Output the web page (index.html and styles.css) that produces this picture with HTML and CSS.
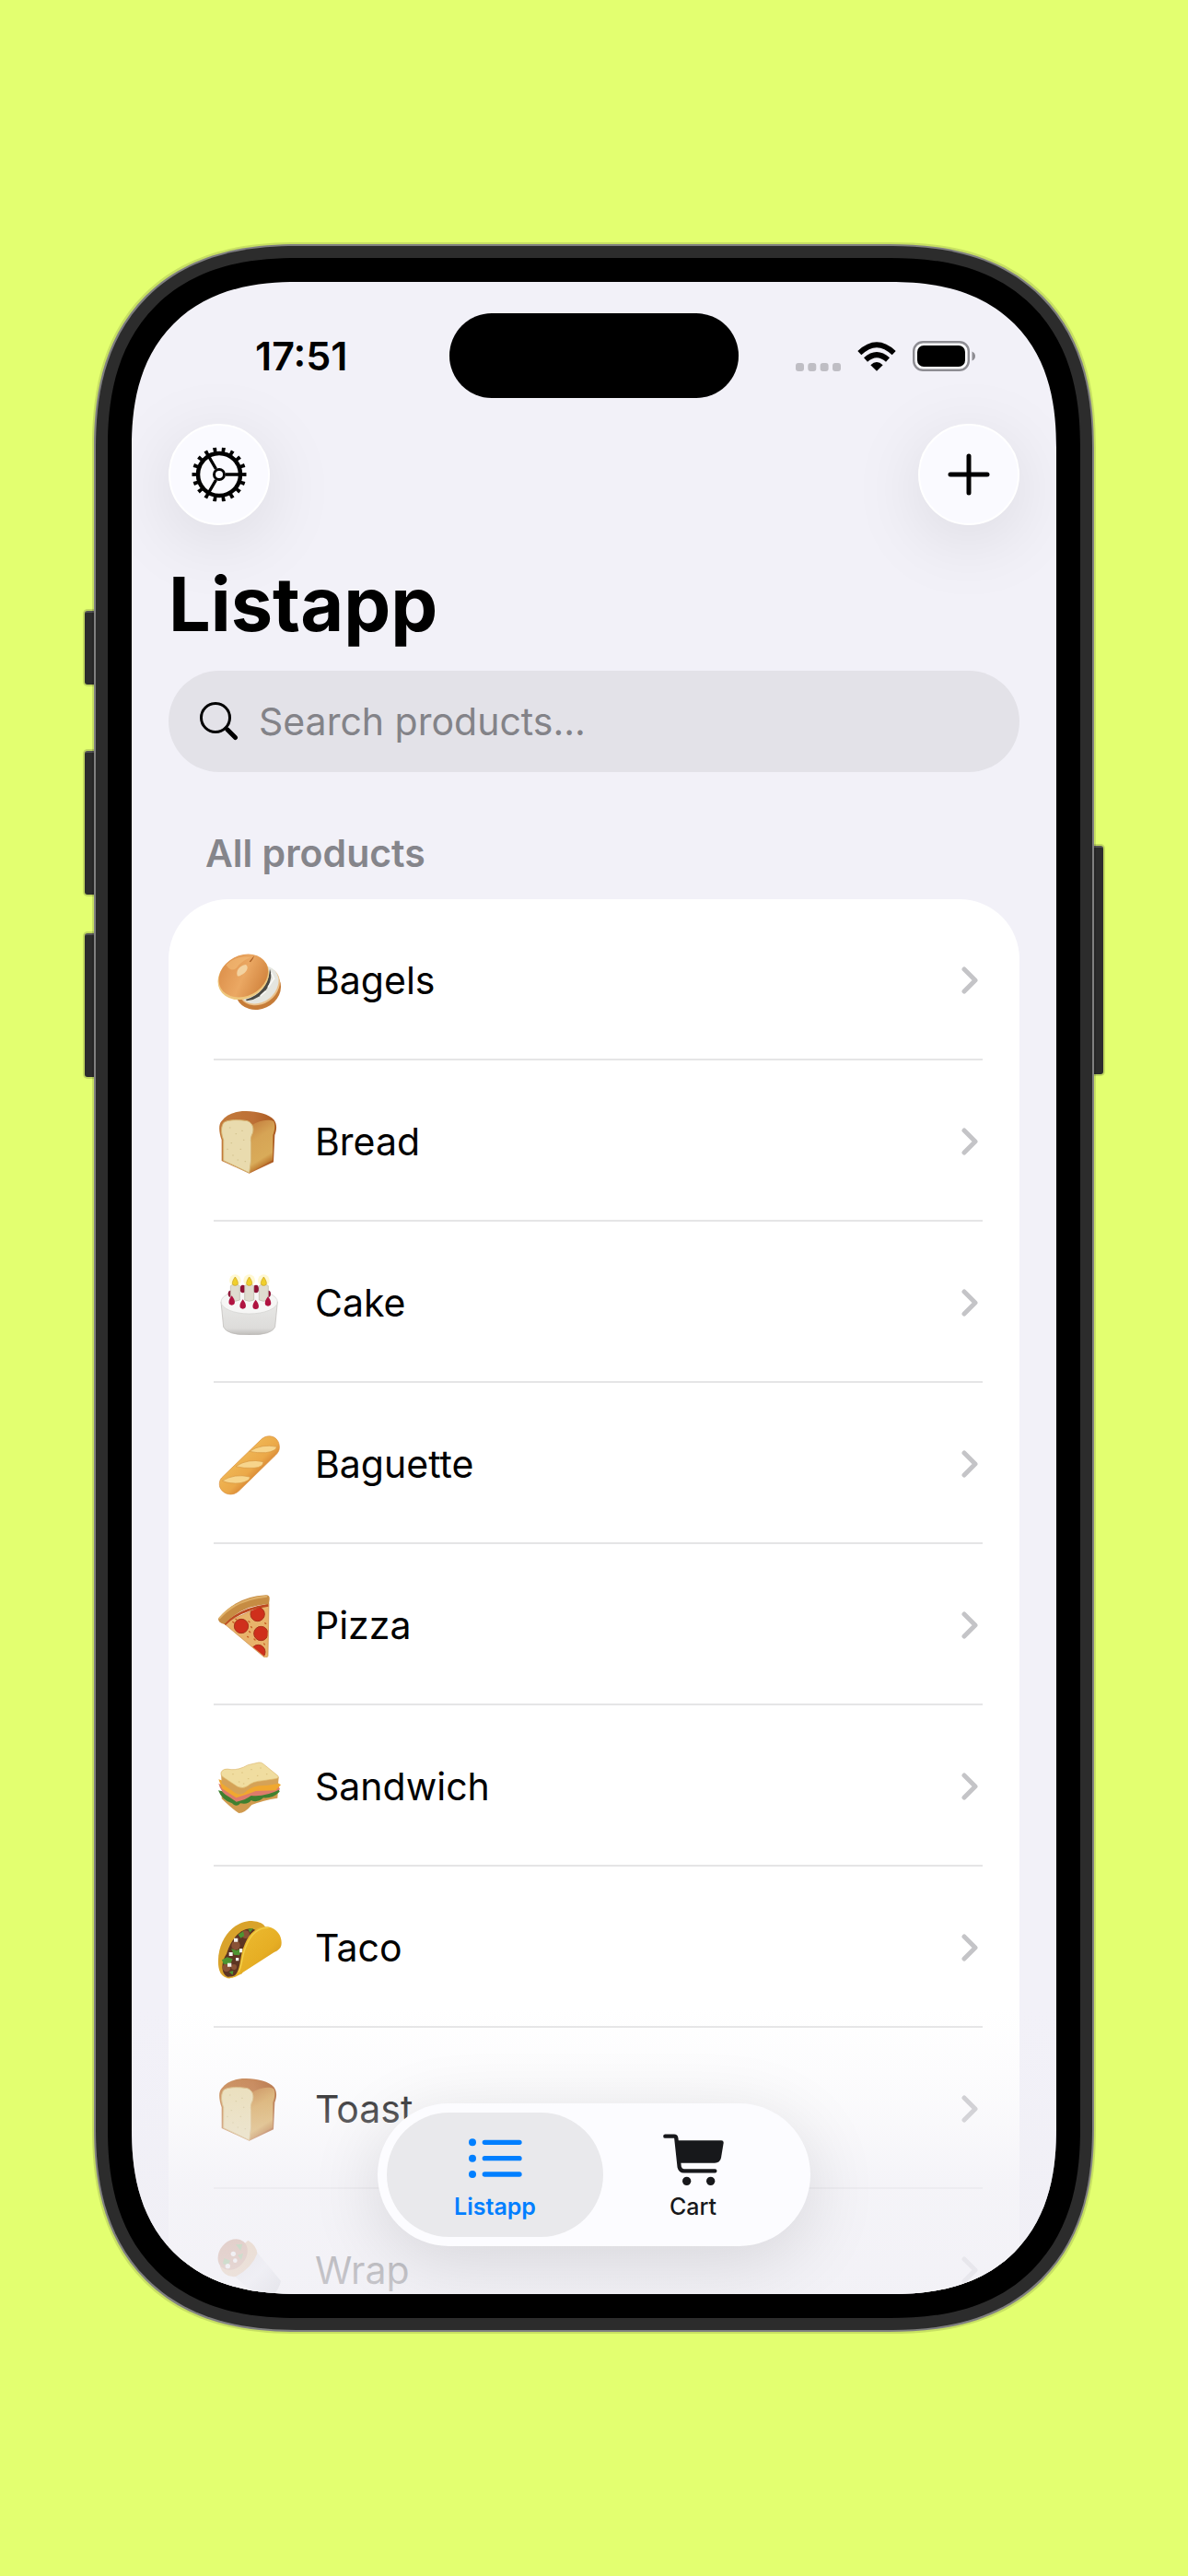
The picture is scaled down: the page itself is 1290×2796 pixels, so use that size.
FILE: index.html
```html
<!DOCTYPE html>
<html lang="en">
<head>
    <meta charset="UTF-8">
    <meta name="viewport" content="width=device-width, initial-scale=1.0">
    <title>Listapp</title>
    <link rel="stylesheet" href="styles.css">
</head>
<body>
<svg class="defs" aria-hidden="true">
    <defs>
        <linearGradient id="crust" x1="0" y1="0" x2="1" y2="1">
            <stop offset="0" stop-color="#d98a45"/><stop offset=".5" stop-color="#eba863"/><stop offset="1" stop-color="#c97832"/>
        </linearGradient>
        <linearGradient id="loafTop" x1="0" y1="0" x2="1" y2="0">
            <stop offset="0" stop-color="#c27a3b"/><stop offset=".6" stop-color="#bd7036"/><stop offset="1" stop-color="#a9581f"/>
        </linearGradient>
        <linearGradient id="loafSide" x1="0" y1="0" x2=".3" y2="1">
            <stop offset="0" stop-color="#c27a3b"/><stop offset=".4" stop-color="#d6a455"/><stop offset=".8" stop-color="#d9ab59"/><stop offset="1" stop-color="#b4671f"/>
        </linearGradient>
        <linearGradient id="cakeSide" x1="0" y1="0" x2="0" y2="1">
            <stop offset="0" stop-color="#e8e8e6"/><stop offset=".8" stop-color="#dddcda"/><stop offset="1" stop-color="#bdbbb8"/>
        </linearGradient>
        <linearGradient id="baguette" x1="0" y1="0" x2="1" y2="1">
            <stop offset=".3" stop-color="#f0b957"/><stop offset=".55" stop-color="#eba848"/><stop offset=".7" stop-color="#d17a2c"/>
        </linearGradient>
        <linearGradient id="shell" x1="0" y1="0" x2="1" y2="1">
            <stop offset="0" stop-color="#eebf35"/><stop offset=".6" stop-color="#e6ae24"/><stop offset="1" stop-color="#c9881a"/>
        </linearGradient>
        <linearGradient id="foil" x1="0" y1="0" x2="1" y2="1">
            <stop offset="0" stop-color="#c9ccd2"/><stop offset=".5" stop-color="#eceef2"/><stop offset="1" stop-color="#a9adb5"/>
        </linearGradient>
        <clipPath id="sliceClip"><path d="M20 98 168 34 160 212Z"/></clipPath>
    </defs>
    <symbol id="chevron" viewBox="0 0 18 30">
        <path d="M3 3 15 15 3 27" fill="none" stroke="currentColor" stroke-width="5" stroke-linecap="round" stroke-linejoin="round"/>
    </symbol>
    <symbol id="loaf" viewBox="0 0 210 210">
        <path d="M14 168 14 100C6 78 2 50 14 38C30 16 60 5 95 6C130 7 170 16 184 34C196 50 193 68 187 84L183 172 104 209Z" fill="url(#loafTop)"/>
        <path d="M112 52C135 38 165 30 184 40C190 56 186 70 181 84L180 166 104 207Z" fill="url(#loafSide)"/>
        <path d="M20 167 20 100C13 82 10 60 20 44C34 32 75 34 98 38C118 46 119 66 115 78C109 90 108 98 110 110L110 165 104 207Z" fill="#e9dbae" stroke="#d6b572" stroke-width="3"/>
        <path d="M40 60h2M60 80h2M45 110h2M80 70h2M75 130h2M50 150h2M90 170h2M85 100h2M32 130h2M66 165h2" stroke="#d0bf8b" stroke-width="3" stroke-linecap="round"/>
    </symbol>
</svg>

<div class="page">
    <div class="rail">
        <span class="key key-action"></span>
        <span class="key"></span>
        <span class="key"></span>
    </div>

    <div class="phone">
        <div class="bezel">
            <div class="screen">
                <div class="status-bar">
                    <span class="time">17:51</span>
                    <span class="island"></span>
                    <span class="status-icons">
                        <svg class="signal" viewBox="0 0 49 9"><g fill="#bfbec4"><rect width="9" height="9" rx="3"/><rect x="13.3" width="9" height="9" rx="3"/><rect x="26.6" width="9" height="9" rx="3"/><rect x="40" width="9" height="9" rx="3"/></g></svg>
                        <svg class="wifi" viewBox="0 0 126 96"><path d="M63 95 43 76Q63 56 83 76ZM33 65 21 52Q63 14 105 52L93 65Q63 38 33 65ZM13 43 1 30Q63-28 125 30L113 43Q63-6 13 43Z"/></svg>
                        <svg class="battery" viewBox="0 0 68 33"><rect x="1.2" y="1.2" width="59.6" height="30.6" rx="10" fill="#fbfbfd" stroke="#8e8d93" stroke-width="2.4"/><rect x="5" y="5" width="52" height="23" rx="7"/><path d="M64.500 11.500Q68 13 68 16.500T64.500 21.500Z" fill="#8e8d93"/></svg>
                    </span>
                </div>

                <div class="toolbar">
                    <button class="round-btn" type="button" aria-label="Settings">
                        <svg width="60" height="60" viewBox="0 0 60 60" fill="none" stroke="#000">
                            <circle cx="30" cy="30" r="27" stroke-width="5" pathLength="36" stroke-dasharray=".8 1.2" stroke-dashoffset=".4"/>
                            <circle cx="30" cy="30" r="23" stroke-width="4.500"/>
                            <circle cx="30" cy="30" r="5.500" stroke-width="3"/>
                            <path d="M37 30H52M26.500 24 19 11M26.500 36 19 49" stroke-width="3.400"/>
                        </svg>
                    </button>
                    <button class="round-btn" type="button" aria-label="Add product">
                        <svg width="46" height="46" viewBox="0 0 46 46" stroke="#000" stroke-width="5" stroke-linecap="round"><path d="M23 3V43M3 23H43"/></svg>
                    </button>
                </div>

                <h1>Listapp</h1>

                <label class="search">
                    <svg width="42" height="42" viewBox="0 0 42 42" fill="none" stroke="#000" stroke-linecap="round"><circle cx="17" cy="17" r="15.500" stroke-width="3"/><path d="M28 28 30 30" stroke-width="3"/><path d="M30 30 38.500 38.500" stroke-width="5"/></svg>
                    <input type="search" placeholder="Search products..." aria-label="Search products">
                </label>

                <h2>All products</h2>

                <ul class="products">
                    <li><a href="#bagels">
                        <svg class="emoji" viewBox="0 0 210 210">
                            <ellipse cx="133" cy="134" rx="76" ry="65" transform="rotate(-25 133 134)" fill="#c67c38"/>
                            <ellipse cx="136" cy="124" rx="72" ry="58" transform="rotate(-35 136 124)" fill="#ebc28c"/>
                            <ellipse cx="134" cy="119" rx="70" ry="57" transform="rotate(-38 134 119)" fill="#e4e5df"/>
                            <path d="M92 168Q165 145 171 68Q182 92 164 128T96 172Z" fill="#4a4943"/>
                            <path d="M140 156 158 140M165 128 184 100M176 80 186 102" stroke="#f8f8f5" stroke-width="5"/>
                            <ellipse cx="85" cy="95" rx="87" ry="69" transform="rotate(-28 85 95)" fill="#eec77d"/>
                            <ellipse cx="85" cy="90" rx="84" ry="66" transform="rotate(-28 85 90)" fill="url(#crust)"/>
                            <path d="M28 55Q60 22 108 30Q75 45 62 65Q45 80 28 55Z" fill="#f4bd78" opacity=".6"/>
                            <path d="M65 90C58 66 84 54 93 54C105 64 94 80 78 88Q70 94 65 90Z" fill="#f3d2a0"/>
                            <path d="M104 44 121 24Q117 36 108 46" fill="#a75c21"/>
                        </svg>
                        <span>Bagels</span><svg class="chevron"><use href="#chevron"/></svg></a></li>
                    <li><a href="#bread">
                        <svg class="emoji"><use href="#loaf"/></svg>
                        <span>Bread</span><svg class="chevron"><use href="#chevron"/></svg></a></li>
                    <li><a href="#cake">
                        <svg class="emoji" viewBox="0 0 210 210">
                            <path d="M12 102 20 184Q30 210 104 210T188 184L196 102Z" fill="url(#cakeSide)" stroke="#b9b7b4" stroke-width="2"/>
                            <ellipse cx="104" cy="102" rx="92" ry="39" fill="#f6f6f5" stroke="#d2d1cf" stroke-width="2"/>
                            <g fill="#8f1235"><ellipse cx="43" cy="76" rx="8" ry="11"/><ellipse cx="83" cy="60" rx="9" ry="13"/><ellipse cx="126" cy="60" rx="9" ry="13"/><ellipse cx="166" cy="76" rx="8" ry="11"/></g>
                            <g fill="#fff3a8" opacity=".5"><circle cx="58" cy="32" r="19"/><circle cx="104" cy="32" r="19"/><circle cx="151" cy="32" r="19"/></g>
                            <g fill="#dfdccf" stroke="#bbb7a8" stroke-width="2"><path d="M43 50Q58 40 73 50V96Q58 104 43 96Z"/><path d="M89 50Q104 40 119 50V96Q104 104 89 96Z"/><path d="M136 50Q151 40 166 50V96Q151 104 136 96Z"/></g>
                            <g fill="#f0cf2c" stroke="#c79d17" stroke-width="2"><path d="M58 21C70 38 70 49 58 49S46 38 58 21Z"/><path d="M104 21C116 38 116 49 104 49S92 38 104 21Z"/><path d="M151 21C163 38 163 49 151 49S139 38 151 21Z"/></g>
                            <g fill="#b01340"><path d="M47 82C60 98 60 113 47 113S34 98 47 82Z"/><path d="M83 94C96 110 96 125 83 125S70 110 83 94Z"/><path d="M125 95C138 111 138 126 125 126S112 111 125 95Z"/><path d="M165 85C178 101 178 116 165 116S152 101 165 85Z"/></g>
                        </svg>
                        <span>Cake</span><svg class="chevron"><use href="#chevron"/></svg></a></li>
                    <li><a href="#baguette">
                        <svg class="emoji" viewBox="0 0 210 210">
                            <path d="M143 25C165 5 200 14 202 48C203 60 198 68 190 76L70 193C50 212 18 205 8 180C5 165 8 155 18 146Z" fill="url(#baguette)" stroke="#d98f3c" stroke-width="2"/>
                            <g fill="#f7d58c" stroke="#d69743" stroke-width="2"><path d="M104 64Q145 38 194 49Q190 64 158 68Q130 70 104 64Z"/><path d="M60 113Q100 86 150 98Q150 115 120 118Q85 120 60 113Z"/><path d="M16 160Q55 135 106 147Q108 160 75 167Q40 171 16 160Z"/></g>
                        </svg>
                        <span>Baguette</span><svg class="chevron"><use href="#chevron"/></svg></a></li>
                    <li><a href="#pizza">
                        <svg class="emoji" viewBox="0 0 210 210">
                            <path d="M20 98 168 34 165 205Q160 216 150 207Z" fill="#e8b36b" stroke="#c98b43" stroke-width="2"/>
                            <path d="M24 102Q75 52 166 40" fill="none" stroke="#bd4a22" stroke-width="8"/>
                            <path d="M50 94l4 3M105 55l4 2M102 92l3 3M104 125l3 3M120 150l3 3M155 98l3 2M110 110l2 3M152 165l2 3M98 142l3 2M60 85l3 2" stroke="#c75c23" stroke-width="4" stroke-linecap="round"/>
                            <g fill="#cf2f1c" stroke="#a8341b" stroke-width="3" clip-path="url(#sliceClip)"><circle cx="131" cy="69" r="23"/><circle cx="78" cy="108" r="23"/><circle cx="142" cy="132" r="23"/><circle cx="133" cy="192" r="23"/></g>
                            <path d="M3 84Q60 12 158 7Q171 6 170 20L168 36Q80 40 23 102Q3 98 3 84Z" fill="#c68c43"/>
                            <path d="M7 82Q62 20 160 11" fill="none" stroke="#deb069" stroke-width="6" stroke-linecap="round"/>
                        </svg>
                        <span>Pizza</span><svg class="chevron"><use href="#chevron"/></svg></a></li>
                    <li><a href="#sandwich">
                        <svg class="emoji" viewBox="0 0 210 210">
                            <path d="M14 130 60 140 198 115 196 143Q150 150 112 165Q90 192 70 192Q50 180 14 145Z" fill="#d09a4e"/>
                            <path d="M3 118Q15 150 48 160Q62 175 75 160Q100 165 110 150Q130 160 150 142Q180 145 203 122L198 108 60 130Z" fill="#3f8030"/>
                            <path d="M4 95Q10 125 40 140L62 155Q90 150 110 135Q155 140 204 115L198 100 60 125Z" fill="#dd7b6b"/>
                            <path d="M4 82 15 112 62 142Q100 130 125 120L190 118 207 100 195 92 60 100Z" fill="#f0a830"/>
                            <path d="M12 60 14 95 58 126Q80 138 98 118Q120 100 160 102L198 96 200 76 190 66Z" fill="#d5a257"/>
                            <path d="M12 60Q18 44 45 50Q70 52 100 35L135 27Q144 26 150 32L197 70Q203 78 190 80L150 86Q115 88 98 104Q82 114 66 106L18 74Q10 68 12 60Z" fill="#f0dda0" stroke="#dcb76b" stroke-width="2"/>
                            <path d="M50 65h2M80 60h2M110 50h2M140 45h2M160 65h2M130 70h2M100 80h2M70 90h2M85 96h2" stroke="#d9bf7b" stroke-width="3" stroke-linecap="round"/>
                        </svg>
                        <span>Sandwich</span><svg class="chevron"><use href="#chevron"/></svg></a></li>
                    <li><a href="#taco">
                        <svg class="emoji" viewBox="0 0 210 210">
                            <path d="M40 205C5 202 0 170 4 130C12 70 55 18 112 18Q150 20 158 40L80 190Z" fill="#d9a32b"/>
                            <path d="M34 200C10 190 12 150 30 125Q45 75 78 52Q105 36 125 48L75 185Q60 200 34 200Z" fill="#5d3422"/>
                            <g fill="#8a5236"><circle cx="92" cy="62" r="13"/><circle cx="60" cy="98" r="14"/><circle cx="30" cy="170" r="13"/><circle cx="54" cy="168" r="9"/></g>
                            <g fill="#4d9432"><path d="M68 62 84 52 88 66 76 74ZM100 44 118 42 106 56ZM45 108 62 114 78 108 72 130 54 128ZM15 145 32 136 50 142 42 160 20 158ZM38 184 52 180 50 194Z"/></g>
                            <g fill="#f4f2ec"><path d="M54 74h13v12H54ZM38 120h12v12H38ZM72 108h10v13H72ZM33 155h13v12H33ZM60 138h10v10H60Z"/></g>
                            <path d="M62 190C78 165 72 130 90 92C108 50 135 34 165 37C200 44 213 75 208 98Q206 110 185 120L72 193Q50 208 30 204Q52 205 62 190Z" fill="url(#shell)"/>
                            <path d="M70 183C84 155 78 130 96 94C112 58 135 40 165 40" fill="none" stroke="#f2cf4a" stroke-width="4" stroke-linecap="round"/>
                        </svg>
                        <span>Taco</span><svg class="chevron"><use href="#chevron"/></svg></a></li>
                    <li><a href="#toast">
                        <svg class="emoji"><use href="#loaf"/></svg>
                        <span>Toast</span><svg class="chevron"><use href="#chevron"/></svg></a></li>
                    <li><a href="#wrap">
                        <svg class="emoji" viewBox="0 0 210 210">
                            <path d="M45 115 128 45 207 140Q195 195 140 200Z" fill="url(#foil)"/>
                            <path d="M8 92 100 8Q128 25 130 50Q115 95 60 126Q22 130 8 92Z" fill="#d9a467"/>
                            <ellipse cx="50" cy="54" rx="55" ry="43" transform="rotate(-50 50 54)" fill="#b5683f"/>
                            <g fill="#4d9432"><path d="M60 22 82 20 76 42ZM22 66 42 74 34 90 18 84ZM66 56 84 50 78 72Z"/></g>
                            <g fill="#f4f2ec"><circle cx="52" cy="52" r="8"/><circle cx="34" cy="92" r="8"/><circle cx="58" cy="74" r="7"/></g>
                        </svg>
                        <span>Wrap</span><svg class="chevron"><use href="#chevron"/></svg></a></li>
                </ul>

                <div class="fade"></div>

                <nav class="tab-bar">
                    <a class="tab active" href="#listapp">
                        <svg width="58" height="56" viewBox="0 0 174 168" fill="currentColor" stroke="currentColor"><g stroke="none"><circle cx="12" cy="28" r="12"/><circle cx="12" cy="80" r="12"/><circle cx="12" cy="132" r="12"/></g><path d="M52 28H165M52 80H165M52 132H165" stroke-width="16" stroke-linecap="round"/></svg>
                        <span>Listapp</span>
                    </a>
                    <a class="tab" href="#cart">
                        <svg width="66" height="56" viewBox="0 0 198 168" fill="currentColor"><path d="M7 8H36Q42 8 43 15L53 108Q56 121 68 121H169" fill="none" stroke="currentColor" stroke-width="13" stroke-linecap="round"/><path d="M44 22H190Q198 22 197 30L189 78Q186 95 168 95H55Z"/><circle cx="77" cy="154" r="14"/><circle cx="155" cy="154" r="14"/></svg>
                        <span>Cart</span>
                    </a>
                </nav>
            </div>
        </div>
    </div>

    <div class="rail rail-right">
        <span class="key key-power"></span>
    </div>
</div>
</body>
</html>
```

FILE: styles.css
```css
* {
    box-sizing: border-box;
}

body {
    margin: 0;
    background-color: #e3ff70;
    color: #000;
    font-family: Inter, 'Liberation Sans', sans-serif;
    font-size: 41px;
}

.defs {
    position: absolute;
    width: 0;
    height: 0;
}

.page {
    display: flex;
    justify-content: center;
    align-items: center;
    min-height: 100vh;
    padding: 0 92px;
}

/* Side keys */
.rail {
    display: flex;
    flex-direction: column;
    align-self: stretch;
    justify-content: center;
    gap: 42px;
    width: 10px;
    padding-bottom: 964px;
}

.rail-right {
    padding-bottom: 712px;
}

.key {
    height: 156px;
    background-color: #2c2c2c;
    border-top: 2px solid #555;
    border-radius: 3px 0 0 3px;
    box-shadow: 0 0 0 2px rgba(0, 0, 0, 0.15);
}

.key-action {
    height: 80px;
    margin-bottom: 30px;
}

.key-power {
    height: 248px;
    border-radius: 0 3px 3px 0;
}

/* Device */
.phone {
    position: relative;
    flex: 1;
    padding: 13px;
    background-color: #2c2c2c;
    border: 2px solid #808080;
    border-radius: 196px;
    box-shadow: 0 0 0 2px rgba(0, 0, 0, 0.12);
}

.bezel {
    padding: 26px;
    background-color: #000;
    border-radius: 181px;
}

.screen {
    position: relative;
    aspect-ratio: 251 / 546;
    padding: 34px 40px 0;
    background-color: #f2f1f8;
    border-radius: 155px;
    overflow: hidden;
}

/* Smoother corners where the browser can draw them */
@supports (corner-shape: superellipse(1.25)) {
    .phone,
    .bezel,
    .screen {
        corner-shape: superellipse(1.25);
    }

    .phone {
        border-radius: 222px;
    }

    .bezel {
        border-radius: 206px;
    }

    .screen {
        border-radius: 180px;
    }
}

.status-bar {
    display: grid;
    grid-template-columns: 1fr auto 1fr;
    align-items: center;
}

.time {
    padding-left: 94px;
    font-size: 43px;
    font-weight: 600;
}

.island {
    width: 314px;
    height: 92px;
    background-color: #000;
    border-radius: 46px;
}

.status-icons {
    display: flex;
    justify-content: flex-end;
    align-items: flex-end;
    gap: 18px;
    padding-right: 48px;
}

.signal {
    width: 49px;
    height: 9px;
}

.wifi {
    width: 42px;
    height: 32px;
}

.battery {
    width: 68px;
    height: 33px;
}

.toolbar {
    display: flex;
    justify-content: space-between;
    margin-top: 28px;
}

.round-btn {
    display: flex;
    justify-content: center;
    align-items: center;
    width: 110px;
    height: 110px;
    padding: 0;
    background-color: #fafaff;
    border: 2px solid #fff;
    border-radius: 50%;
    box-shadow: 0 16px 80px rgba(0, 0, 0, 0.1);
}

h1 {
    margin: 36px 0 22px;
    font-size: 81px;
    font-weight: 700;
    line-height: 100px;
}

.search {
    display: flex;
    align-items: center;
    gap: 22px;
    height: 110px;
    padding: 0 34px;
    background-color: #e3e2e8;
    border-radius: 55px;
}

.search input {
    flex: 1;
    min-width: 0;
    padding: 0;
    background: none;
    border: none;
    outline: none;
    font: inherit;
}

.search input::placeholder {
    color: #838388;
    opacity: 1;
}

h2 {
    margin: 63px 40px 25px;
    color: #85858b;
    font-size: 41px;
    font-weight: 600;
    line-height: 50px;
}

/* Product list */
.products {
    margin: 0;
    padding: 0 40px 0 49px;
    list-style: none;
    background-color: #fff;
    border-radius: 65px 65px 0 0;
}

.products a {
    display: flex;
    align-items: center;
    height: 175px;
    padding: 3px 5px 0 4px;
    border-bottom: 2px solid #e5e5e6;
    color: inherit;
    text-decoration: none;
}

.products span {
    flex: 1;
    padding-left: 36px;
}

.emoji {
    width: 70px;
    height: 70px;
}

.chevron {
    width: 18px;
    height: 30px;
    color: #c4c4c7;
}

/* Bottom overlay */
.fade {
    position: absolute;
    left: 0;
    right: 0;
    bottom: 0;
    height: 310px;
    background: linear-gradient(rgba(240, 239, 245, 0), rgba(240, 239, 245, 0.28) 32%, rgba(240, 239, 245, 0.7) 62%, rgba(240, 239, 245, 0.84) 100%);
}

.tab-bar {
    position: absolute;
    left: 50%;
    bottom: 52px;
    display: flex;
    padding: 10px;
    background-color: #fcfcff;
    border-radius: 78px;
    transform: translateX(-50%);
    box-shadow: 0 16px 80px rgba(0, 0, 0, 0.12);
}

.tab {
    display: flex;
    flex-direction: column;
    align-items: center;
    gap: 8px;
    width: 235px;
    height: 135px;
    padding-top: 23px;
    border-radius: 68px;
    color: #17181b;
    font-size: 25px;
    font-weight: 500;
    line-height: 30px;
    text-decoration: none;
}

.tab + .tab {
    margin-left: -20px;
}

.tab.active {
    background-color: #e9e9ec;
    color: #007fff;
    font-weight: 600;
}
```
